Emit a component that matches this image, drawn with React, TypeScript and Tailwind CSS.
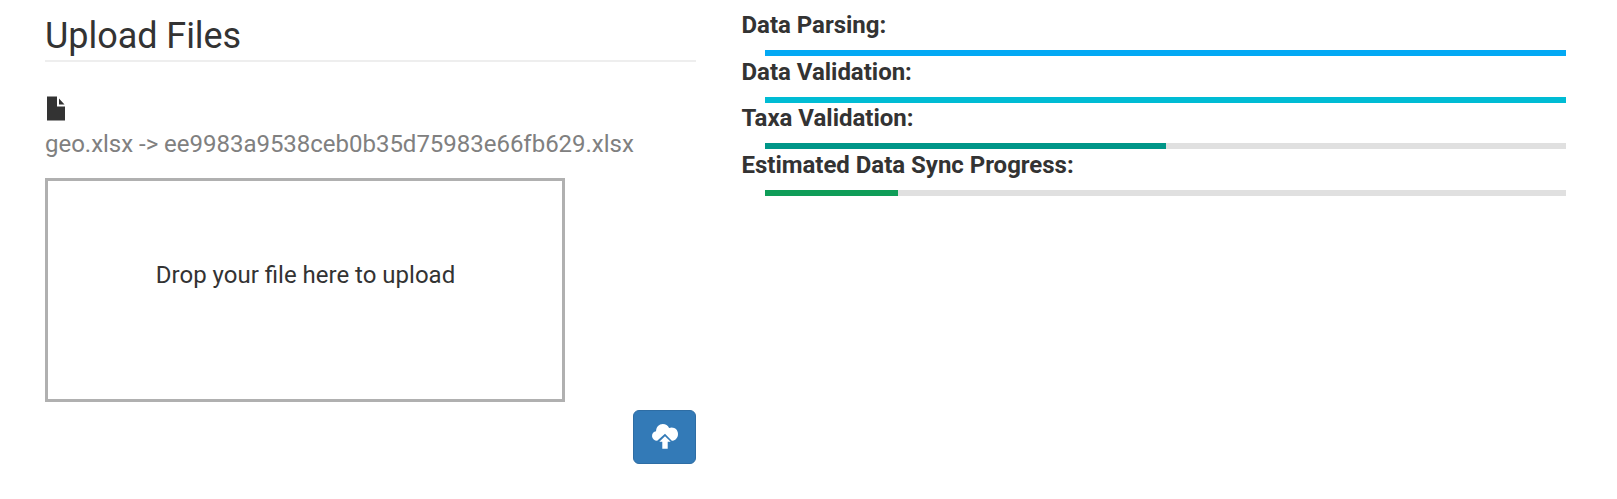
export default function App() {
  const bars = [
    { label: "Data Parsing:", pct: 100, color: "bg-[#03a9f4]" },
    { label: "Data Validation:", pct: 100, color: "bg-[#00bcd4]" },
    { label: "Taxa Validation:", pct: 50, color: "bg-[#009688]" },
    { label: "Estimated Data Sync Progress:", pct: 16.65, color: "bg-[#0f9d58]" },
  ];
  return (
    <main className="flex h-[499px] w-full bg-white pl-[45px] font-[Roboto,sans-serif] text-[24px] leading-[34px] text-[#333]">
      <section className="w-[651px]">
        <h1 className="h-[62px] border-b-2 border-[#eee] pt-[16px] text-[36px] leading-[40px] tracking-[-0.05px]">Upload Files</h1>
        <svg className="mt-[34px] ml-[2px] h-[25px] w-[19px]" viewBox="0 0 19 25" fill="#333">
          <path d="M0 .5h10v10h8v14H0zM12 2.5l5.5 6H12z" />
        </svg>
        <p className="mt-[6px] tracking-[-0.02px] text-[#808080]">geo.xlsx -&gt; ee9983a9538ceb0b35d75983e66fb629.xlsx</p>
        <div className="mt-[17px] flex h-[224px] w-[520px] justify-center border-3 border-[#b0b0b0] pt-[77px] pl-[1px]">
          Drop your file here to upload
        </div>
        <button className="mt-[8px] ml-auto flex h-[54px] w-[63px] items-center justify-center rounded-[6px] border border-[#2e6da4] bg-[#337ab7]">
          <svg className="h-[26px] w-[26px]" viewBox="0 0 26 26" fill="#fff">
            <path d="M5.2 16.7A5 5 0 0 1 0 12.2C0 9.5 1.7 7.5 4 7.2 4.2 3 7 0 10.8 0c2.8 0 5.2 1.5 6.3 4.1.8-.4 1.7-.6 2.6-.6 3.6 0 6.3 2.8 6.3 6.4 0 3.8-2.6 6.8-6.2 6.8L13 9.8z" />
            <path d="m13 12.3 5.7 5.5h-3v7h-5.4v-7h-3z" />
          </svg>
        </button>
      </section>
      <section className="ml-[45.5px] w-[824.5px] pt-[8px] font-bold">
        {bars.map((b) => (
          <div key={b.label} className="h-[46.5px]">
            <div className="tracking-[-0.02px]">{b.label}</div>
            <div className="mt-[8px] ml-[23.5px] h-[6px] bg-[#e0e0e0]">
              <div className={`h-full ${b.color}`} style={{ width: `${b.pct}%` }} />
            </div>
          </div>
        ))}
      </section>
    </main>
  );
}
